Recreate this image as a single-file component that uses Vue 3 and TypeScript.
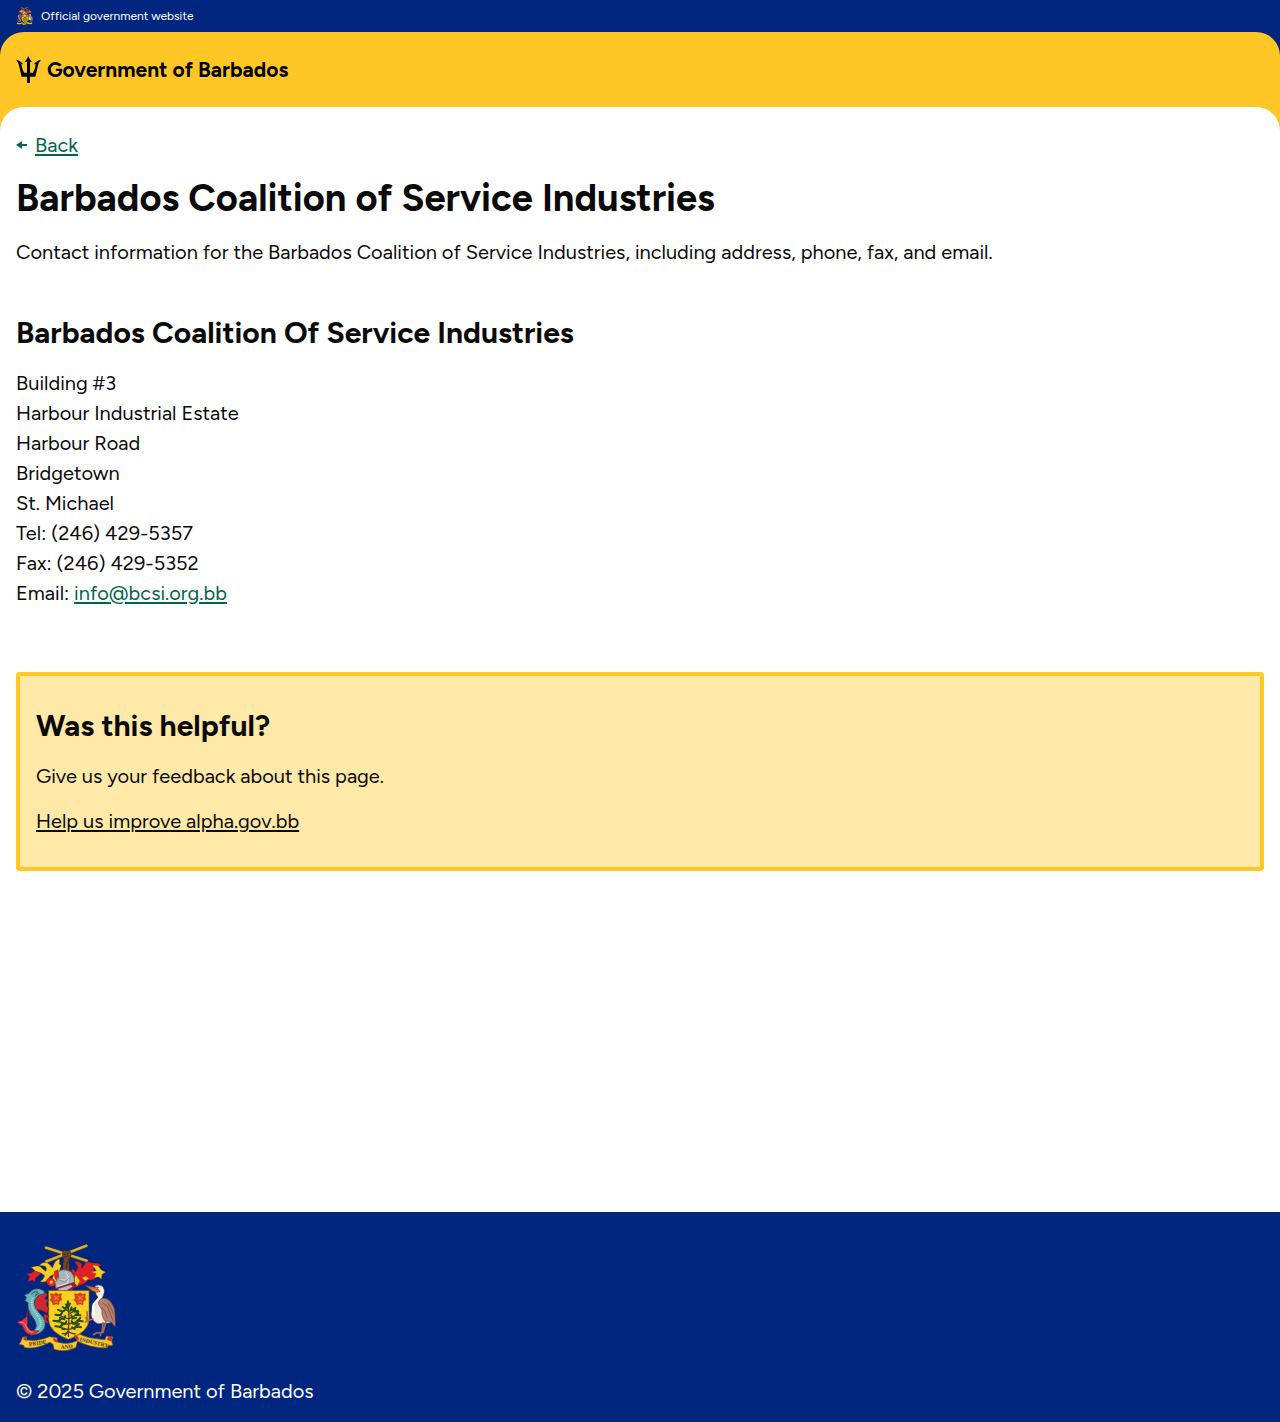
<script setup lang="ts">
interface Agency {
  title: string
  summary: string
  heading: string
  lines: string[]
  email: string
}

const agency: Agency = {
  title: 'Barbados Coalition of Service Industries',
  summary:
    'Contact information for the Barbados Coalition of Service Industries, including address, phone, fax, and email.',
  heading: 'Barbados Coalition Of Service Industries',
  lines: [
    'Building #3',
    'Harbour Industrial Estate',
    'Harbour Road',
    'Bridgetown',
    'St. Michael',
    'Tel: (246) 429-5357',
    'Fax: (246) 429-5352',
  ],
  email: 'info@bcsi.org.bb',
}
</script>

<template>
  <div class="page">
    <div class="banner">
      <svg class="banner-crest" viewBox="0 0 300 324" aria-hidden="true">
        <defs>
          <symbol id="crest" viewBox="0 0 300 324">
            <!-- crossed sugar canes held in a fist -->
            <g stroke-linecap="round" fill="none">
              <path d="M90 12 212 51M91 53 211 6" stroke="#5f4a1c" stroke-width="10" />
              <path d="M90 11 212 50M91 52 211 5" stroke="#dfb02c" stroke-width="7" />
            </g>
            <path d="M139 29q1-11 12-10l13 4 1 12-6 11 2 42h-21l2-44z" fill="#70472c" stroke="#35221a" stroke-width="2" />
            <path d="M144 32l14-3M144 39l15-3M154 50l-4 32" stroke="#35221a" stroke-width="2" fill="none" />
            <!-- mantling, left -->
            <path d="M126 122q-12-2-17-13-2-8 5-17-13 2-16 11-7 14-25 10 10-7 13-18-10-11-21-9-8 5-16 4l8-10-11-10 17-4q10-1 16 8l10 8q6-8-1-15-10-4-18-2 9-13 24-8 9 4 15 15l8-18q8-9 14-9l-1 15 6 5q-8 11-3 22z" fill="#f8cb20" stroke="#7a5014" stroke-width="1" />
            <path d="M62 82q-7-4-15 5l-16 3 10 7-5 16 13-5 7 7 2-13q11-6 16-15zM91 111q6-13 19-8 9 8 9 20-10 7-19 3-9-5-9-15zM116 82l10-5 2 24-8 7q-8-12-4-26z" fill="#df2027" stroke="#8d1825" stroke-width="1" />
            <path d="M101 111q7-4 10 2-3 10-10 5z" fill="#f8cb20" />
            <!-- mantling, right -->
            <path d="M158 111q13-7 15-20l-8-11q10-9 14 4l7-13q-3-14-12-18 17-3 23 8l1 13 10-16q10-7 17-2l13 2q11-1 18 7l-19 3-5 10 5 9q14-9 26-1-16 5-23 16-10 9-23 5-8 11-18 14l-13 4q-10-15-28-14z" fill="#df2027" stroke="#8d1825" stroke-width="1" />
            <path d="M229 63l17 2 9 12 14 8-11 6-2 14-9-7-12 3 5-12-15-5 16-4zM169 113l11-20 12 17-9 18-12-5zM198 101l11-4 11 7-13 6z" fill="#f8cb20" stroke="#7a5014" stroke-width="1" />
            <!-- helmet -->
            <path d="M127 83q14-11 35-1 13 8 14 33l-29 10-27 10-3-20 11-11z" fill="#aeb2b7" stroke="#5d656d" stroke-width="3" />
            <path d="M124 105l23 4 13-12M148 82q12 15 8 35l-34 11" stroke="#dcdddf" stroke-width="3" fill="none" />
            <path d="M122 105l24 8 18-15" stroke="#707880" stroke-width="2" fill="none" />
            <path d="M118 132l56-17 9 10-16 14h-44z" fill="#a7152d" />
            <path d="M127 134l38-12 5 6-20 12h-22z" fill="#b9bcc0" stroke="#646970" />
            <!-- shield -->
            <path d="M98 140h121v87q-2 37-62 59-57-22-59-59z" fill="#fbd021" stroke="#8c6a18" stroke-width="2" />
            <g id="bloom">
              <path d="M103 149l11 1 6-4 7 4 10-1-2 11 3 8-8 3-1 11-9-2-9 3-3-10-7-4 5-8z" fill="#dc3d21" stroke="#a1471b" />
              <path d="M113 155l15 12M129 155l-16 13M116 174h10" stroke="#f2a322" stroke-width="3" />
            </g>
            <use href="#bloom" x="72" />
            <!-- bearded fig tree -->
            <path d="M157 178q4 47-1 88M158 202l-16-10M158 211l21-14M158 225l-35-14M158 225l31-17M157 241l-35-10M157 240l36-9M156 257l-27-8M156 257l30-8M156 262q-7 9-19 7M156 262l-10 14M156 262l2 17M156 262q10 8 23 8" stroke="#4a3f18" stroke-width="4" fill="none" />
            <path d="M156 172v15M150 181l5 10 7-12M140 189l9 5 3-8M167 190l-3 9 10-4M126 197l13 6 7-4M178 191l-2 12 9-3M118 212l14 2 6-7M187 203l-8 10 14 1M132 222l13 3 3-9M166 214l3 10 12-3M112 230l14 2 8-6M193 222l-9 8 16 2M137 239l11 1 3-8M167 231l5 9 12-2M118 247l14 1 8-6M189 240l-9 6 15 4M139 254l7 2M168 250l8 5" stroke="#24501f" stroke-width="6" stroke-linecap="round" fill="none" />
            <!-- dolphin -->
            <path d="M63 136l19 4 12 11-8 13 10 5-6 12 8 12-5 15-17-9-22-3 2-31 13-9zM36 190l10-9 9 23-13 13zM84 210l15 6-9 9 8 13-14-4z" fill="#cf2633" stroke="#751b2b" stroke-width="2" />
            <path d="M39 148q12-17 32-13 14 3 16 13l-18 5-11 11q-7 13 1 29 11 15 22 27 11 17 3 34-12 20-38 18l-14-6q26-2 29-19 1-12-10-26-17-23-15-45l-9-6 5-9-7-8z" fill="#68b5b8" stroke="#244f64" stroke-width="2" />
            <path d="M49 162q-6 19 5 39 16 21 20 32 2 18-17 29" stroke="#b9dcd9" stroke-width="6" stroke-dasharray="3 3" fill="none" />
            <path d="M46 151q9-11 20-8M57 157l10-10" stroke="#39727d" stroke-width="4" fill="none" />
            <circle cx="63" cy="149" r="3" fill="#f4df86" stroke="#182d3b" stroke-width="2" />
            <path d="M47 274l-17-8-12-22-16-9 14-5 15-11 4-18q-2 18 0 30l-2 14 11 14 25 2-11 9z" fill="#df393f" stroke="#821f2c" stroke-width="2" />
            <path d="M10 234q12-1 18 8l8 18 14 6" stroke="#f58e82" stroke-width="3" fill="none" />
            <!-- pelican -->
            <path d="M237 127q11-8 21-1 10 8 5 25l-5 13 27 19 8 49-15 5-33 2q-19-9-20-29l6-22 18-23-9-15z" fill="#eee9dd" stroke="#6b5749" stroke-width="2" />
            <path d="M257 163q19-2 30 15 10 15 10 34l1 36-14-15-19-4q-10-17-7-30l-10-18q-2-13 9-18z" fill="#b77e6b" stroke="#684c43" stroke-width="2" />
            <path d="M261 178q16 7 20 26l11 29M257 190q14 12 17 32M276 178q12 14 16 34" stroke="#895a49" stroke-width="3" fill="none" />
            <path d="M209 125l34 6 9 12q-12 4-23-3z" fill="#f58239" stroke="#85442a" stroke-width="2" />
            <path d="M211 126l36 12" stroke="#b43f2b" stroke-width="2" />
            <circle cx="246" cy="130" r="2" fill="#201b20" />
            <path d="M257 137q5 9-2 19l-22 25q-6 18 4 33" stroke="#fffdf4" stroke-width="7" fill="none" />
            <path d="M231 225l-17 5-4-9M216 230l-8 4M214 227l-1-24M261 236l-3 30-18 1-7 5M255 266l-2 8M270 233l-9 32" stroke="#ab6a4f" stroke-width="5" stroke-linecap="round" fill="none" />
            <!-- motto ribbon -->
            <path d="M20 279l11-1 1 10q34 5 68-10l23 3 1 13q30 10 60-4l-10-14 18-5q24 13 75 16l4-11 20 3-4 13 4 12-15 1-3 7q-45 1-88-20l-6 19q-31 15-65 5l-3-15-9-6q-43 22-76 16l-3-7-14-3 6-9z" fill="#f5c92f" stroke="#79501b" stroke-width="2" />
            <path d="M22 280h8l2 11-9-4zM110 283l12 1 1 12-9-4zM276 278l14 2-4 12-13-4zM174 277l9-3 7 12-6 4z" fill="#cd3330" />
          </symbol>
        </defs>
        <use href="#crest" width="300" height="324" />
      </svg>
      <span>Official government website</span>
    </div>

    <header class="header">
      <a class="brand" href="#">
        <svg class="trident" viewBox="0 0 75 81" aria-hidden="true">
          <path d="M37 0q3 9 11 18l-6-1v33h9q8-13 8-26l-6 1q9-12 22-14-8 8-10 21-3 15-7 30H42v19h-9V62H17q-4-15-7-30Q8 19 0 11q13 2 22 14l-6-1q1 13 8 26h9V17l-7 1q8-9 11-18z" />
        </svg>
        <span>Government of Barbados</span>
      </a>
    </header>

    <div class="main-wrap">
      <main class="main">
        <nav class="back">
          <svg class="arrow" viewBox="0 0 12 10" aria-hidden="true">
            <path d="M0 5 6 1v3h5v2H6v3z" />
          </svg>
          <a href="#">Back</a>
        </nav>
        <h1>{{ agency.title }}</h1>
        <p class="summary">{{ agency.summary }}</p>
        <h2>{{ agency.heading }}</h2>
        <address>
          <span v-for="line in agency.lines" :key="line">{{ line }}</span>
          <span>Email: <a :href="'mailto:' + agency.email">{{ agency.email }}</a></span>
        </address>
        <section class="feedback">
          <h2>Was this helpful?</h2>
          <p>Give us your feedback about this page.</p>
          <a href="#">Help us improve alpha.gov.bb</a>
        </section>
      </main>
    </div>

    <footer class="footer">
      <svg class="footer-crest" viewBox="0 0 300 324" role="img" aria-label="Coat of arms of Barbados">
        <use href="#crest" width="300" height="324" />
        <g class="motto">
          <text transform="translate(40 307) rotate(-9)">PRIDE</text>
          <text transform="translate(134 315) rotate(-3)">AND</text>
          <text transform="translate(190 291) rotate(13)">INDUSTRY</text>
        </g>
      </svg>
      <p>© 2025 Government of Barbados</p>
    </footer>
  </div>
</template>

<style>
body {
  margin: 0;
}
</style>

<style scoped>
.page {
  display: flex;
  flex-direction: column;
  min-height: 100vh;
  color: #0a0a0a;
  background: #00267f;
  font-family: Figtree, Lato, "Liberation Sans", sans-serif;
  font-size: 20px;
  line-height: 30px;
}
h1,
h2,
p {
  margin: 0;
}
h1,
h2 {
  font-weight: 700;
}
a {
  color: #00654a;
  text-decoration-thickness: 2px;
  text-underline-offset: 2px;
}
.banner {
  display: flex;
  align-items: center;
  gap: 8px;
  height: 32px;
  padding: 0 16px;
  color: #fff;
  font-size: 12px;
  line-height: 16px;
}
.banner-crest {
  width: 17px;
  height: 18px;
}
.header {
  display: flex;
  padding: 24px 16px;
  border-radius: 24px 24px 0 0;
  background: #ffc726;
}
.brand {
  display: flex;
  align-items: center;
  gap: 6px;
  color: #000;
  font-size: 21px;
  font-weight: 700;
  line-height: 27px;
  text-decoration: none;
}
.trident {
  width: 25px;
  height: 27px;
}
.main-wrap {
  display: flex;
  flex: 1;
  background: linear-gradient(#ffc726 24px, #fff 24px);
}
.main {
  flex: 1;
  min-width: 0;
  padding: 23px 16px 64px;
  border-radius: 24px 24px 0 0;
  background: #fff;
}
.back {
  display: flex;
  align-items: center;
  gap: 7px;
}
.arrow {
  width: 12px;
  height: 10px;
  fill: #0e5f64;
}
h1 {
  margin-top: 13px;
  font-size: 38px;
  line-height: 50px;
}
.summary {
  margin-top: 14px;
}
h2 {
  margin-top: 46px;
  font-size: 30px;
  line-height: 40px;
}
address {
  display: flex;
  flex-direction: column;
  margin-top: 15px;
  font-style: normal;
}
.feedback {
  margin-top: 64px;
  padding: 30px 16px 31px;
  border: 4px solid #ffc726;
  border-radius: 4px;
  background: #ffe9a8;
}
.feedback h2 {
  margin-top: 0;
}
.feedback p {
  margin: 15px 0;
}
.feedback a {
  color: #0a0a0a;
}
.footer {
  padding: 32px 16px 16px;
  color: #fff;
  background: #00267f;
}
.footer-crest {
  display: block;
  width: 100px;
  height: 108px;
}
.footer p {
  margin-top: 24px;
}
.motto {
  fill: #493313;
  font-family: "Liberation Serif", serif;
  font-size: 17px;
  font-weight: 700;
}
</style>
